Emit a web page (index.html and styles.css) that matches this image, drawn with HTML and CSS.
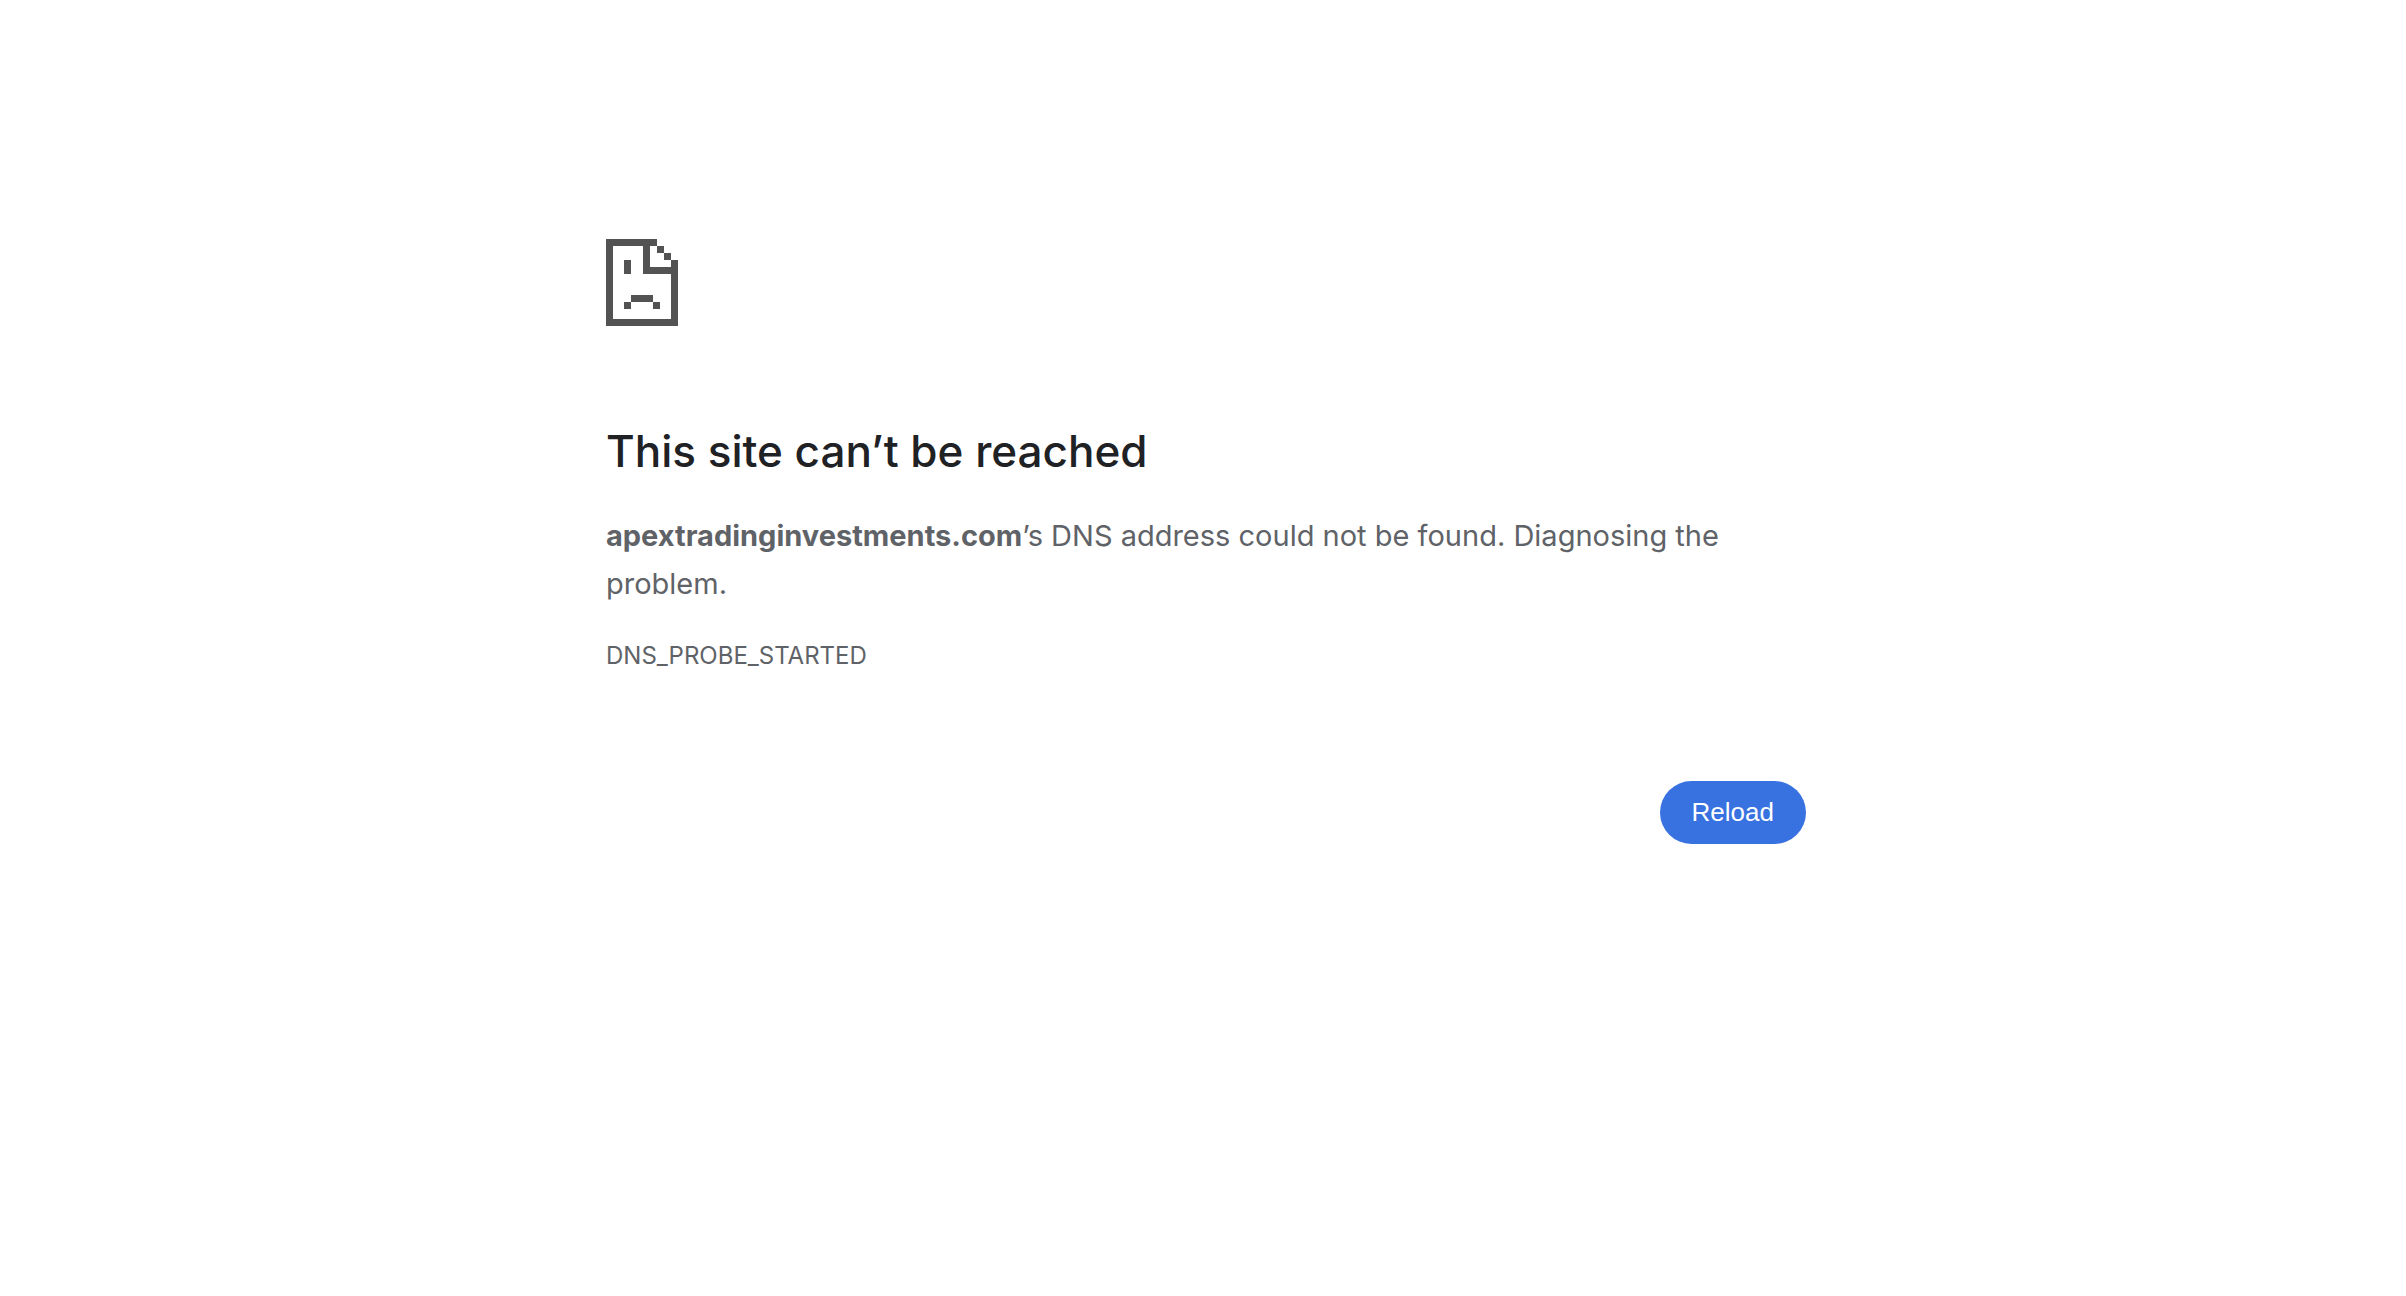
FILE: index.html
```html
<!DOCTYPE html>
<html lang="en">
<head>
<meta charset="utf-8">
<title>apextradinginvestments.com</title>
<link rel="stylesheet" href="styles.css">
</head>
<body>
<main class="wrapper">
	<svg class="icon" viewBox="0 0 72 87" aria-hidden="true" shape-rendering="crispEdges">
		<path d="M0 0H51V7H44V28H65V21H72V87H0ZM7 7V80H65V35H37V7Z" fill-rule="evenodd"/>
		<path d="M51 7H58V14H65V21H58V14H51Z"/>
		<path d="M18 21H25V35H18Z"/>
		<path d="M25 56H47V63H54V70H47V63H25V70H18V63H25Z"/>
	</svg>
	<h1>This site can’t be reached</h1>
	<p class="summary"><strong>apextradinginvestments.com</strong>’s DNS address could not be found. Diagnosing the problem.</p>
	<div class="error-code">DNS_PROBE_STARTED</div>
	<div class="buttons">
		<button type="button" class="reload">Reload</button>
	</div>
</main>
</body>
</html>
```
FILE: styles.css
```css
body {
	margin: 0;
	padding-left: 6px;
	background: #fff;
	color: #5f6368;
	font-family: Inter, "Liberation Sans", sans-serif;
	font-size: 29px;
	line-height: 48px;
}

.wrapper {
	max-width: 1200px;
	margin: 0 auto;
	padding-top: 239px;
}

.icon {
	display: block;
	width: 72px;
	height: 87px;
	fill: #535353;
}

h1 {
	margin: 96px 0 32px;
	color: #202124;
	font-size: 44px;
	font-weight: 500;
	line-height: 58px;
}

.summary {
	margin: 0;
}

.error-code {
	margin-top: 24px;
	font-size: 24px;
}

.buttons {
	display: flex;
	justify-content: flex-end;
	margin-top: 101px;
}

.reload {
	padding: 0 32px;
	border: 0;
	border-radius: 32px;
	background: #3871e0;
	color: #fff;
	font-family: "Liberation Sans", Arial, sans-serif;
	font-size: 26px;
	line-height: 63px;
	cursor: pointer;
}
```
